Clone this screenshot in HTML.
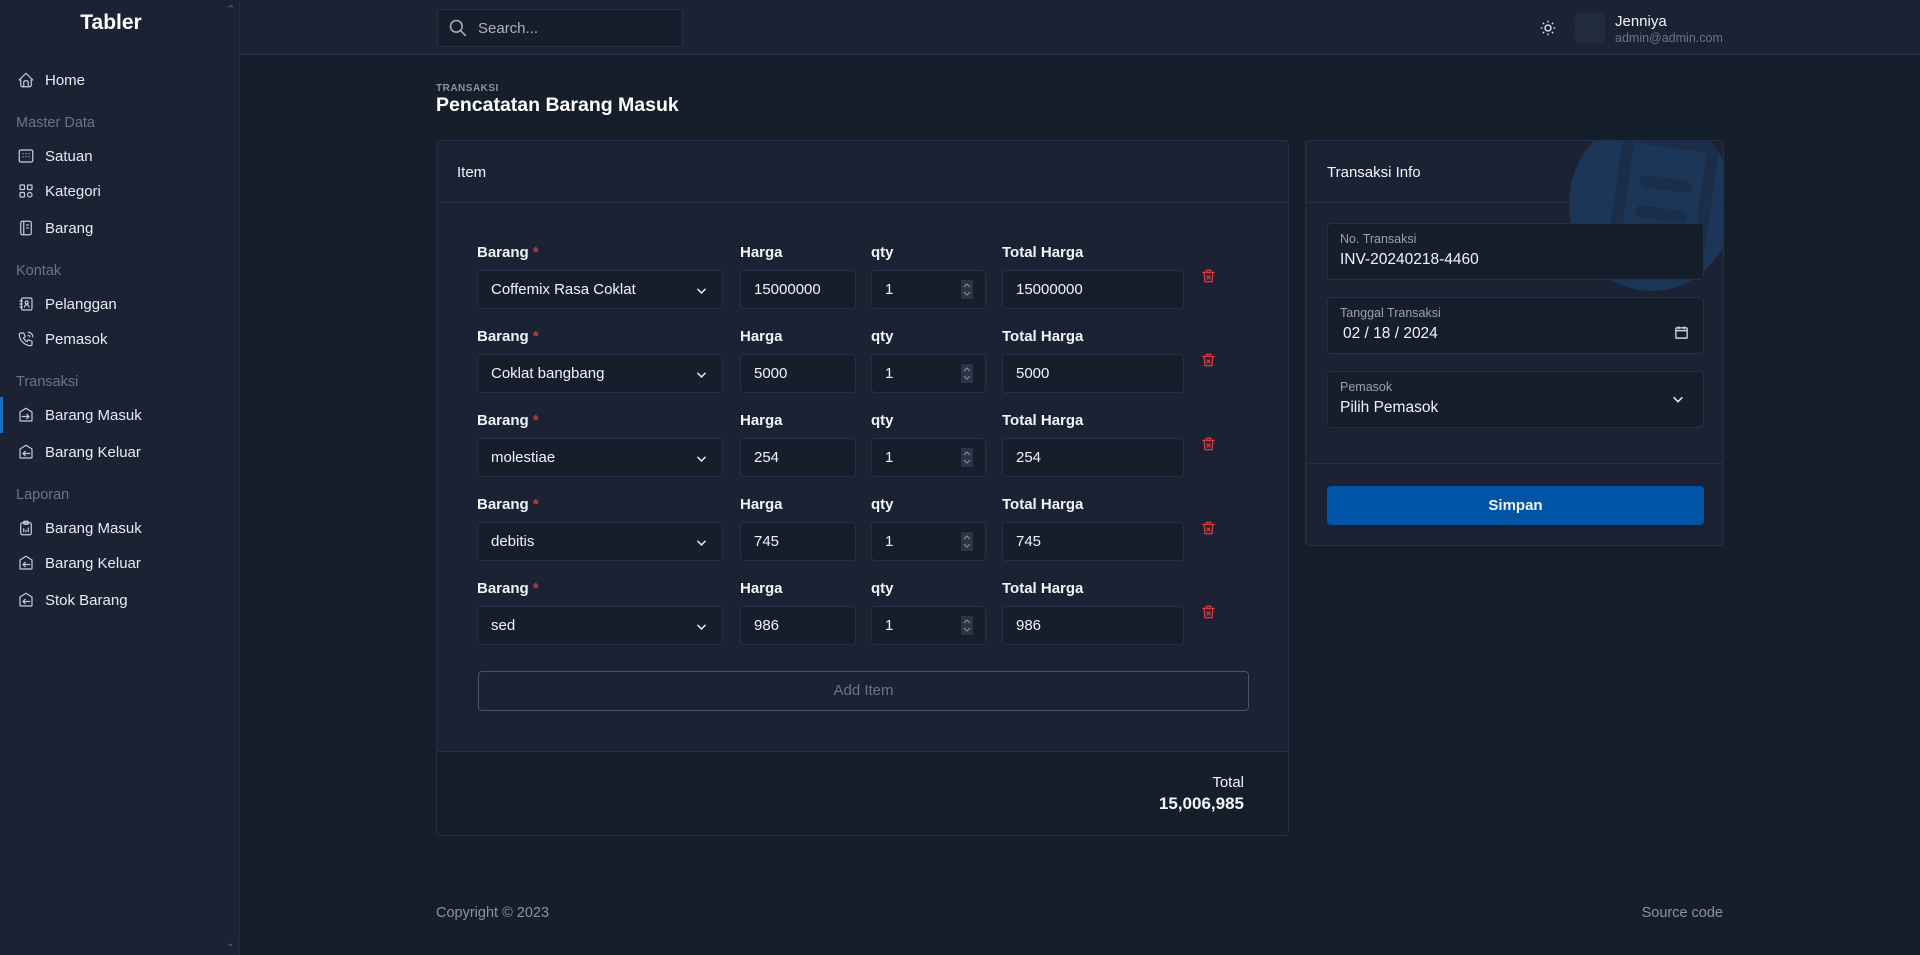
<!DOCTYPE html>
<html><head><meta charset="utf-8"><style>
*{box-sizing:border-box;margin:0;padding:0}
body{width:1920px;height:955px;overflow:hidden;background:#151f2c;font-family:"Liberation Sans",sans-serif;color:#f1f5f9;position:relative}
.abs{position:absolute}
#side{left:0;top:0;width:240px;height:955px;background:#1a2234;border-right:1px solid #222c3f}
#head{left:240px;top:0;width:1680px;height:55px;background:#1a2234;border-bottom:1px solid #243049}
.nav{position:absolute;left:17px;font-size:15px;color:#e8ecf1;display:flex;align-items:center;gap:10px}
.nav svg{width:18px;height:18px;stroke:#c8ced8;fill:none;stroke-width:1.6;stroke-linecap:round;stroke-linejoin:round}
.sec{position:absolute;left:16px;font-size:14.5px;color:#6b7485}
.card{background:#1a2234;border:1px solid #243049;border-radius:4px}
.lbl{position:absolute;font-size:15px;font-weight:bold;color:#f1f5f9}
.inp{position:absolute;height:39px;background:#151f2c;border:1px solid #243049;border-radius:4px;font-size:15px;color:#f1f5f9;padding-left:13px;line-height:37px}
.muted{color:#9aa0ac}
</style></head><body>
<div id="side" class="abs">
 <div class="abs" style="left:0;width:222px;top:11px;text-align:center;font-size:21px;font-weight:bold;color:#fff">Tabler</div>
 <div class="abs" style="left:226px;top:3px;color:#5b6577;font-size:11px">&#8963;</div>
 <div class="abs" style="left:226px;top:936px;color:#5b6577;font-size:11px">&#8964;</div>
 <div class="nav" style="top:71px"><svg viewBox="0 0 24 24"><path d="M5 12H3l9-9 9 9h-2M5 12v7a2 2 0 002 2h10a2 2 0 002-2v-7"/><path d="M9 21v-6a2 2 0 012-2h2a2 2 0 012 2v6"/></svg>Home</div>
 <div class="sec" style="top:115px">Master Data</div>
 <div class="nav" style="top:147px"><svg viewBox="0 0 24 24"><rect x="3" y="4" width="18" height="16" rx="2"/><path d="M8 9h.01M12 9h.01M16 9h.01M8 13h.01M12 13h.01M16 13h.01"/></svg>Satuan</div>
 <div class="nav" style="top:182px"><svg viewBox="0 0 24 24"><rect x="4" y="4" width="6" height="6" rx="1"/><rect x="14" y="4" width="6" height="6" rx="1"/><rect x="4" y="14" width="6" height="6" rx="1"/><circle cx="17" cy="17" r="3"/></svg>Kategori</div>
 <div class="nav" style="top:219px"><svg viewBox="0 0 24 24"><rect x="5" y="3" width="14" height="18" rx="2"/><path d="M9 3v18M13 8h2M13 12h2"/></svg>Barang</div>
 <div class="sec" style="top:263px">Kontak</div>
 <div class="nav" style="top:295px"><svg viewBox="0 0 24 24"><rect x="6" y="4" width="14" height="16" rx="2"/><circle cx="13" cy="10" r="2"/><path d="M10 16a3 3 0 016 0M4 8h3M4 12h3M4 16h3"/></svg>Pelanggan</div>
 <div class="nav" style="top:330px"><svg viewBox="0 0 24 24"><path d="M5 4h4l2 5-2.5 1.5a11 11 0 005 5L15 13l5 2v4a2 2 0 01-2 2A16 16 0 013 6a2 2 0 012-2M15 7a2 2 0 012 2M15 3a6 6 0 016 6"/></svg>Pemasok</div>
 <div class="sec" style="top:374px">Transaksi</div>
 <div class="abs" style="left:0;top:397px;width:3px;height:36px;background:#206bc4"></div>
 <div class="nav" style="top:406px"><svg viewBox="0 0 24 24"><path d="M4 8l8-5 8 5v11a1 1 0 01-1 1H5a1 1 0 01-1-1z"/><path d="M7 14h9M13 11l3 3-3 3"/></svg>Barang Masuk</div>
 <div class="nav" style="top:443px"><svg viewBox="0 0 24 24"><path d="M4 8l8-5 8 5v11a1 1 0 01-1 1H5a1 1 0 01-1-1z"/><path d="M17 14H8M11 11l-3 3 3 3"/></svg>Barang Keluar</div>
 <div class="sec" style="top:487px">Laporan</div>
 <div class="nav" style="top:519px"><svg viewBox="0 0 24 24"><rect x="5" y="5" width="14" height="16" rx="2"/><rect x="9" y="3" width="6" height="4" rx="1"/><path d="M9 17v-4M12 17v-2M15 17v-5"/></svg>Barang Masuk</div>
 <div class="nav" style="top:554px"><svg viewBox="0 0 24 24"><path d="M4 8l8-5 8 5v11a1 1 0 01-1 1H5a1 1 0 01-1-1z"/><path d="M17 14H8M11 11l-3 3 3 3"/></svg>Barang Keluar</div>
 <div class="nav" style="top:591px"><svg viewBox="0 0 24 24"><path d="M4 8l8-5 8 5v11a1 1 0 01-1 1H5a1 1 0 01-1-1z"/><path d="M17 14H8M11 11l-3 3 3 3"/></svg>Stok Barang</div>
</div>
<div id="head" class="abs">
 <div class="abs" style="left:197px;top:9px;width:246px;height:38px;background:#151f2c;border:1px solid #243049;border-radius:4px">
  <svg class="abs" style="left:10px;top:8px" width="20" height="20" viewBox="0 0 24 24" fill="none" stroke="#aab2bf" stroke-width="1.8" stroke-linecap="round"><circle cx="10" cy="10" r="7"/><path d="M21 21l-6-6"/></svg>
  <div class="abs" style="left:40px;top:10px;font-size:15px;color:#aab2bf">Search...</div>
 </div>
 <svg class="abs" style="left:1299px;top:19px" width="18" height="18" viewBox="0 0 24 24" fill="none" stroke="#e8ecf1" stroke-width="1.8" stroke-linecap="round"><circle cx="12" cy="12" r="4"/><path d="M3 12h1M12 3v1M20 12h1M12 20v1M5.6 5.6l.7.7M18.4 5.6l-.7.7M17.7 17.7l.7.7M6.3 17.7l-.7.7"/></svg>
 <div class="abs" style="left:1335px;top:13px;width:30px;height:30px;background:#202b3e;border-radius:4px"></div>
 <div class="abs" style="left:1375px;top:13px;font-size:15px;color:#f1f5f9">Jenniya</div>
 <div class="abs" style="left:1375px;top:31px;font-size:12.5px;color:#6b7485">admin@admin.com</div>
</div>
<div class="abs" style="left:436px;top:83px;font-size:10px;letter-spacing:.5px;color:#8a93a2;font-weight:bold">TRANSAKSI</div>
<div class="abs" style="left:436px;top:94px;font-size:19.5px;font-weight:bold;color:#fff">Pencatatan Barang Masuk</div>

<div class="abs card" style="left:436px;top:140px;width:853px;height:696px;overflow:hidden">
 <div class="abs" style="left:20px;top:23px;font-size:15px">Item</div>
 <div class="abs" style="left:0;top:61px;width:100%;height:1px;background:#243049"></div>
 <div class="abs" style="left:0;top:610px;width:100%;height:86px;background:#151f2c;border-top:1px solid #243049"></div>
 <div class="abs" style="right:44px;top:633px;font-size:15px">Total</div>
 <div class="abs" style="right:44px;top:653px;font-size:17px;font-weight:bold">15,006,985</div>
 <div class="abs" style="left:41px;top:530px;width:771px;height:40px;border:1px solid #4a5568;border-radius:4px;text-align:center;line-height:38px;font-size:15px;color:#6b7485">Add Item</div>
</div>
<div id="rows"></div>

<div class="abs card" style="left:1305px;top:140px;width:419px;height:406px;overflow:hidden">
 <div class="abs" style="left:263px;top:-25px;width:165px;height:175px;border-radius:50%;background:#1c3658"></div>
 <svg class="abs" style="left:290px;top:-10px" width="130" height="150" viewBox="0 0 130 150" fill="none" stroke="#1a2e4a" stroke-width="12" stroke-linecap="round"><rect x="25" y="10" width="85" height="110" rx="10" transform="rotate(8 65 65)"/><path d="M50 50l40 6M45 80l40 6"/></svg>
 <div class="abs" style="left:21px;top:23px;font-size:15px">Transaksi Info</div>
 <div class="abs" style="left:0;top:61px;width:100%;height:1px;background:#243049"></div>
 <div class="abs" style="left:0;top:322px;width:100%;height:1px;background:#243049"></div>
 <div class="abs" style="left:21px;top:82px;width:377px;height:57px;background:#151f2c;border:1px solid #243049;border-radius:4px">
  <div class="abs muted" style="left:12px;top:8px;font-size:12.5px">No. Transaksi</div>
  <div class="abs" style="left:12px;top:27px;font-size:15.5px">INV-20240218-4460</div></div>
 <div class="abs" style="left:21px;top:156px;width:377px;height:57px;background:#151f2c;border:1px solid #243049;border-radius:4px">
  <div class="abs muted" style="left:12px;top:8px;font-size:12.5px">Tanggal Transaksi</div>
  <div class="abs" style="left:15px;top:27px;font-size:15.5px">02 / 18 / 2024</div>
  <svg class="abs" style="left:346px;top:27px" width="15" height="15" viewBox="0 0 16 16" fill="none" stroke="#cbd2dc" stroke-width="1.5"><rect x="2" y="3" width="12" height="11" rx="1"/><path d="M2 6h12M5 1.5v3M11 1.5v3"/></svg></div>
 <div class="abs" style="left:21px;top:230px;width:377px;height:57px;background:#151f2c;border:1px solid #243049;border-radius:4px">
  <div class="abs muted" style="left:12px;top:8px;font-size:12.5px">Pemasok</div>
  <div class="abs" style="left:12px;top:27px;font-size:15.5px">Pilih Pemasok</div>
  <svg class="abs" style="left:343px;top:20px" width="14" height="14" viewBox="0 0 16 16" fill="none" stroke="#e8ecf1" stroke-width="1.8"><path d="M3 6l5 5 5-5"/></svg></div>
 <div class="abs" style="left:21px;top:345px;width:377px;height:39px;background:#0054a6;border-radius:4px;text-align:center;line-height:39px;font-size:15px;font-weight:bold">Simpan</div>
</div>

<div class="abs" style="left:436px;top:905px;font-size:14.5px;color:#8a93a2">Copyright © 2023</div>
<div class="abs" style="right:197px;top:905px;font-size:14.5px;color:#8a93a2">Source code</div>

<script>
var data=[["Coffemix Rasa Coklat","15000000","15000000"],["Coklat bangbang","5000","5000"],["molestiae","254","254"],["debitis","745","745"],["sed","986","986"]];
var h="";
data.forEach(function(d,i){var y=244+i*84;
h+='<div class="lbl" style="left:477px;top:'+y+'px">Barang <span style="color:#d63939">*</span></div>';
h+='<div class="lbl" style="left:740px;top:'+y+'px">Harga</div>';
h+='<div class="lbl" style="left:871px;top:'+y+'px">qty</div>';
h+='<div class="lbl" style="left:1002px;top:'+y+'px">Total Harga</div>';
var iy=y+26;
h+='<div class="inp" style="left:477px;top:'+iy+'px;width:246px">'+d[0]+'<svg style="position:absolute;right:14px;top:13px" width="13" height="13" viewBox="0 0 16 16" fill="none" stroke="#e8ecf1" stroke-width="1.8"><path d="M3 6l5 5 5-5"/></svg></div>';
h+='<div class="inp" style="left:740px;top:'+iy+'px;width:116px">'+d[1]+'</div>';
h+='<div class="inp" style="left:871px;top:'+iy+'px;width:115px">1<svg style="position:absolute;right:12px;top:9px" width="12" height="19" viewBox="0 0 12 19"><rect width="12" height="19" fill="#2d3446"/><path d="M3 7l3-3 3 3M3 12l3 3 3-3" fill="none" stroke="#8a93a2" stroke-width="1"/></svg></div>';
h+='<div class="inp" style="left:1002px;top:'+iy+'px;width:182px">'+d[2]+'</div>';
h+='<svg style="position:absolute;left:1200px;top:'+(y+22)+'px" width="17" height="20" viewBox="0 0 24 24" fill="none" stroke="#d63939" stroke-width="2" stroke-linecap="round"><path d="M4 7h16M6 7l1 13h10l1-13M9 7V4h6v3M10 12l4 4M14 12l-4 4"/></svg>';
});
document.getElementById("rows").innerHTML=h;
</script>
</body></html>
